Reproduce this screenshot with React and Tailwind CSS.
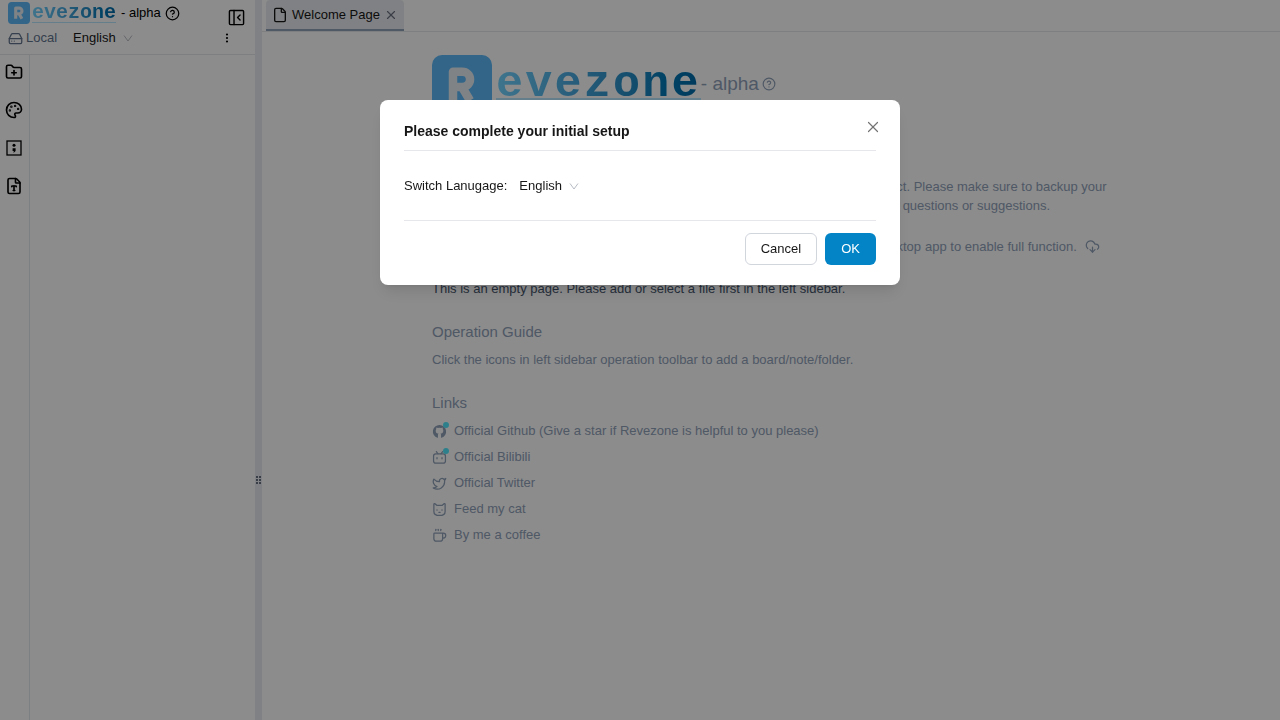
import React, { useState } from 'react';
import {
  CircleQuestionMark,
  CloudDownload,
  Coffee,
  EllipsisVertical,
  File,
  FileType,
  FolderPlus,
  HardDrive,
  Palette,
  Twitter,
  X,
} from 'lucide-react';

const iconProps = {
  viewBox: '0 0 24 24',
  fill: 'none',
  stroke: 'currentColor',
  strokeWidth: 2,
  strokeLinecap: 'round',
  strokeLinejoin: 'round',
};

const GithubIcon = ({ className }) => (
  <svg viewBox="0 0 24 24" fill="currentColor" className={className}>
    <path d="M12 1.5A10.5 10.5 0 0 0 8.7 22c.5.1.8-.2.8-.6v-3.6c0-1.3.5-2 1-2.5-2.6-.3-4.6-1.2-4.6-4.6 0-1.2.4-2 1-2.7-.2-.7-.3-1.7.1-2.5.9 0 1.9.5 2.6 1a9 9 0 0 1 4.8 0c.8-.5 1.7-1 2.6-1 .4.8.3 1.8.1 2.5.6.7 1 1.5 1 2.7 0 3.4-2 4.3-4.6 4.6.5.5 1 1.2 1 2.5v3.6c0 .4.3.7.8.6A10.5 10.5 0 0 0 12 1.5z" />
  </svg>
);

const BilibiliIcon = ({ className }) => (
  <svg {...iconProps} className={className}>
    <rect x="2.5" y="6" width="19" height="15" rx="3.5" />
    <path d="M7 2.5 9.5 6M17 2.5 14.5 6M8 12v2M16 12v2" />
  </svg>
);

const CatIcon = ({ className }) => (
  <svg {...iconProps} className={className}>
    <path d="M3 3.5c0-1 1-1.400 1.800-.7L8 5.500h8l3.200-2.700c.8-.7 1.800-.3 1.800.7V15c0 4-4 6.500-9 6.500S3 19 3 15z" />
    <path d="M8 12.500v.5M16 12.500v.5M11 16.500h2" />
  </svg>
);

const BoardIcon = ({ className }) => (
  <svg viewBox="0 0 18 18" fill="none" stroke="currentColor" className={className}>
    <rect x="2" y="2" width="14" height="14" strokeWidth="1.3" />
    <circle cx="9" cy="6.3" r="1.5" fill="currentColor" stroke="none" />
    <path d="M7.600 9.200h3v2.800L8.500 14l.3-2.100H7.600z" fill="currentColor" stroke="none" />
  </svg>
);

const CollapseIcon = ({ className }) => (
  <svg {...iconProps} className={className}>
    <rect x="2" y="2" width="20" height="20" rx="1.5" />
    <path d="M8.500 2v20M17 8.500 13.500 12l3.500 3.500" />
  </svg>
);

const ArrowDown = () => (
  <svg viewBox="0 0 12 12" fill="none" stroke="currentColor" className="pointer-events-none size-3 text-[#b8bcc4]">
    <path d="M2 3.500 6 9 10 3.500" />
  </svg>
);

const LogoMark = ({ className }) => (
  <svg viewBox="0 0 60 60" fill="none" className={className}>
    <rect width="60" height="60" rx="10" fill="#5bb8f8" />
    <path
      d="M21 46V16.700h9.400a7.600 7.600 0 0 1 0 15.300H21M30 32l8 13.500"
      stroke="#e8eef3"
      strokeWidth="8.5"
      strokeLinejoin="round"
    />
  </svg>
);

const LanguageSelect = ({ id, value, onChange }) => (
  <span className="inline-flex items-center gap-[6px]">
    <select
      id={id}
      aria-label="Language"
      value={value}
      onChange={(e) => onChange(e.target.value)}
      className="appearance-none bg-transparent text-neutral-900 outline-none"
    >
      <option>English</option>
    </select>
    <ArrowDown />
  </span>
);

const tools = [
  { label: 'Add folder', icon: FolderPlus },
  { label: 'Add board', icon: Palette },
  { label: 'Add drawing', icon: BoardIcon },
  { label: 'Add note', icon: FileType },
];

const links = [
  { label: 'Official Github (Give a star if Revezone is helpful to you please)', icon: GithubIcon, badge: true },
  { label: 'Official Bilibili', icon: BilibiliIcon, badge: true },
  { label: 'Official Twitter', icon: Twitter },
  { label: 'Feed my cat', icon: CatIcon },
  { label: 'By me a coffee', icon: Coffee },
];

const Sidebar = ({ language, setLanguage }) => (
  <aside className="flex w-[255px] shrink-0 flex-col text-black">
    <header className="border-b border-gray-200 pb-1">
      <div className="flex h-[26px] items-center pr-[10px] pl-2">
        <LogoMark className="size-[22px] shrink-0" />
        <span className="ml-[2px] border-b border-sky-200 bg-gradient-to-r from-sky-300 to-sky-700 bg-clip-text font-['Liberation_Mono',monospace] text-xl leading-[18px] font-bold text-transparent">
          evezone
        </span>
        <span className="ml-[5px]">- alpha</span>
        <CircleQuestionMark className="ml-1 size-[15px]" />
        <button aria-label="Collapse sidebar" className="mt-2 ml-auto">
          <CollapseIcon className="size-[17px]" />
        </button>
      </div>
      <div className="flex h-6 items-center pr-5 pl-2">
        <HardDrive className="size-[15px] text-slate-500" />
        <span className="mr-4 ml-[3px] text-slate-500">Local</span>
        <LanguageSelect id="sidebar-language" value={language} onChange={setLanguage} />
        <button aria-label="More" className="mr-[2px] ml-auto">
          <EllipsisVertical className="size-3" strokeWidth={2.4} />
        </button>
      </div>
    </header>
    <div className="flex flex-1">
      <nav className="flex w-[30px] flex-col items-start gap-5 border-r border-gray-200 pt-2 pl-[5px]">
        {tools.map((tool) => {
          const Icon = tool.icon;
          return (
            <button key={tool.label} aria-label={tool.label}>
              <Icon className="size-[18px]" strokeWidth={2.2} />
            </button>
          );
        })}
      </nav>
    </div>
  </aside>
);

const Welcome = () => (
  <section className="mx-auto w-full max-w-[678px] pt-[23px] text-slate-400">
    <div className="flex h-[60px]">
      <LogoMark className="size-[60px] shrink-0" />
      <span className="ml-1 h-[45px] border-b-2 border-sky-200 bg-gradient-to-r from-sky-300 to-sky-700 bg-clip-text font-['Liberation_Mono',monospace] text-[45px] leading-[60px] font-bold tracking-wider text-transparent">
        evezone
      </span>
      <span className="flex h-[58px] items-center gap-[3px] text-[19px]">
        - alpha
        <CircleQuestionMark className="size-[14px]" />
      </span>
    </div>
    <div className="mt-[62px] leading-[19px]">
      <p>
        <span className="inline-block w-[478px] text-right">
          Revezone is in alpha and your data is only stored locally by this project.
        </span>{' '}
        Please make sure to backup your
      </p>
      <p>
        <span className="inline-block w-[467px] text-right">data regularly. Contact us if you have any</span>{' '}
        questions or suggestions.
      </p>
    </div>
    <p className="mt-[22px] flex items-center leading-[19px]">
      <span className="w-[489px] text-right">You are using the web version, please download the desktop</span>
      <span className="ml-1">app to enable full function.</span>
      <CloudDownload className="ml-2 size-[15px]" />
    </p>
    <p className="mt-[23px] leading-[19px] text-slate-600">
      This is an empty page. Please add or select a file first in the left sidebar.
    </p>
    <h2 className="mt-6 text-[15px] leading-[19px]">Operation Guide</h2>
    <p className="mt-[9px] leading-5">Click the icons in left sidebar operation toolbar to add a board/note/folder.</p>
    <h2 className="mt-[23px] text-[15px] leading-[19px]">Links</h2>
    <ul className="mt-[9px] flex flex-col gap-[6px] leading-5">
      {links.map((link) => {
        const Icon = link.icon;
        return (
          <li key={link.label}>
            <a href="#links" className="flex items-center gap-[7px]">
              <span className="relative">
                <Icon className="size-[15px]" />
                {link.badge && (
                  <span className="absolute -top-[2px] -right-[2px] size-[6px] rounded-full bg-cyan-300" />
                )}
              </span>
              {link.label}
            </a>
          </li>
        );
      })}
    </ul>
  </section>
);

const SetupDialog = ({ language, setLanguage, onClose }) => (
  <div className="fixed inset-0 z-50 bg-black/45 pt-[100px]">
    <div
      role="dialog"
      aria-labelledby="setup-title"
      className="relative mx-auto w-full max-w-[520px] rounded-lg bg-white px-6 py-5 text-neutral-900 shadow-lg"
    >
      <h1 id="setup-title" className="border-b border-gray-200 pb-2 text-sm leading-[22px] font-bold">
        Please complete your initial setup
      </h1>
      <button aria-label="Close" onClick={onClose} className="absolute top-[21px] right-[21px] text-neutral-500">
        <X className="size-3" strokeWidth={1.6} viewBox="4 4 16 16" />
      </button>
      <div className="flex h-[70px] items-center gap-3 border-b border-gray-200">
        <label htmlFor="setup-language">Switch Lanugage:</label>
        <LanguageSelect id="setup-language" value={language} onChange={setLanguage} />
      </div>
      <div className="flex justify-end gap-2 pt-3">
        <button onClick={onClose} className="h-8 rounded-md border border-gray-300 px-[15px]">
          Cancel
        </button>
        <button onClick={onClose} className="h-8 rounded-md bg-[#0284c7] px-4 text-white">
          OK
        </button>
      </div>
    </div>
  </div>
);

const App = () => {
  const [language, setLanguage] = useState('English');
  const [open, setOpen] = useState(true);

  return (
    <div className="flex min-h-screen bg-white font-['Liberation_Sans',Arial,sans-serif] text-[13px] leading-5">
      <Sidebar language={language} setLanguage={setLanguage} />
      <div className="relative w-[7px] shrink-0 bg-[#e9ecf0]">
        <div className="absolute top-2/3 left-px grid -translate-y-1/2 grid-cols-2 gap-px">
          {[0, 1, 2, 3, 4, 5].map((dot) => (
            <span key={dot} className="size-[2px] bg-gray-500" />
          ))}
        </div>
      </div>
      <main className="min-w-0 flex-1">
        <div className="flex border-b border-gray-200 pl-1">
          <div className="flex h-[31px] items-center rounded-t border-b-2 border-slate-400 bg-[#e9ecf0] px-[6px] text-neutral-900">
            <File className="mr-1 size-4" />
            Welcome Page
            <button aria-label="Close tab" className="ml-1 text-gray-500">
              <X className="size-[14px]" />
            </button>
          </div>
        </div>
        <Welcome />
      </main>
      {open && <SetupDialog language={language} setLanguage={setLanguage} onClose={() => setOpen(false)} />}
    </div>
  );
};

export default App;
